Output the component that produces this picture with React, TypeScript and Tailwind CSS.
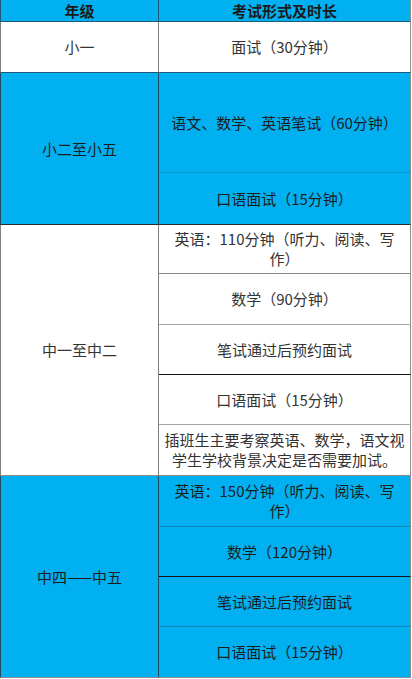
import React from "react";

const BLUE = "bg-[#00b0f0]";

type Sub = { text: React.ReactNode; h: string; line: string };

type Group = {
  label: string;
  blue: boolean;
  subs: Sub[];
};

const groups: Group[] = [
  {
    label: "小一",
    blue: false,
    subs: [{ text: "面试（30分钟）", h: "h-[51px]", line: "border-b-[#1d5a78]" }],
  },
  {
    label: "小二至小五",
    blue: true,
    subs: [
      { text: "语文、数学、英语笔试（60分钟）", h: "h-[100px]", line: "border-b-[#0b98cf]" },
      { text: "口语面试（15分钟）", h: "h-[52px]", line: "border-b-[#2b2b2b]" },
    ],
  },
  {
    label: "中一至中二",
    blue: false,
    subs: [
      {
        text: (
          <>
            英语：110分钟（听力、阅读、写
            <br />
            作）
          </>
        ),
        h: "h-[49px]",
        line: "border-b-[#8a8a8a]",
      },
      { text: "数学（90分钟）", h: "h-[51px]", line: "border-b-[#a6a6a6]" },
      { text: "笔试通过后预约面试", h: "h-[50px]", line: "border-b-[#111111]" },
      { text: "口语面试（15分钟）", h: "h-[50px]", line: "border-b-[#a6a6a6]" },
      {
        text: (
          <>
            插班生主要考察英语、数学，语文视
            <br />
            学生学校背景决定是否需要加试。
          </>
        ),
        h: "h-[51px]",
        line: "border-b-[#8a8a8a]",
      },
    ],
  },
  {
    label: "中四——中五",
    blue: true,
    subs: [
      {
        text: (
          <>
            英语：150分钟（听力、阅读、写
            <br />
            作）
          </>
        ),
        h: "h-[51px]",
        line: "border-b-[#1686b4]",
      },
      { text: "数学（120分钟）", h: "h-[50px]", line: "border-b-[#111111]" },
      { text: "笔试通过后预约面试", h: "h-[50px]", line: "border-b-[#1686b4]" },
      { text: "口语面试（15分钟）", h: "h-[51px]", line: "border-b-[#8c8c8c]" },
    ],
  },
];

export default function App() {
  return (
    <div
      className="min-h-screen w-[412px] bg-white"
      style={{ fontFamily: '"Noto Sans CJK SC", "Liberation Sans", sans-serif' }}
    >
      <table className="w-[411px] table-fixed border-separate border-spacing-0 text-[15px] leading-[20px]">
        <colgroup>
          <col className="w-[159px]" />
          <col className="w-[252px]" />
        </colgroup>
        <thead>
          <tr>
            <th
              className={`${BLUE} h-[22px] border-b border-l border-r border-b-[#1d5a78] border-l-[#1d5a78] border-r-[#1d5a78] p-0 text-center align-middle font-semibold text-[#1a1a1a]`}
            >
              年级
            </th>
            <th
              className={`${BLUE} h-[22px] border-b border-r border-b-[#1d5a78] border-r-[#8c8c8c] p-0 text-center align-middle font-semibold text-[#1a1a1a]`}
            >
              考试形式及时长
            </th>
          </tr>
        </thead>
        <tbody>
          {groups.map((g) =>
            g.subs.map((s, i) => {
              const bg = g.blue ? BLUE : "bg-white";
              const ink = g.blue ? "text-[#1c1c1c]" : "text-[#333333]";
              const edge = g.blue ? "border-l-[#1d4d66] border-r-[#1d4d66]" : "border-l-[#808080] border-r-[#808080]";
              const last = g.subs[g.subs.length - 1].line;
              return (
                <tr key={g.label + i}>
                  {i === 0 && (
                    <td
                      rowSpan={g.subs.length}
                      className={`${bg} ${ink} ${edge} border-b border-l border-r ${last} p-0 text-center align-middle`}
                    >
                      {g.label}
                    </td>
                  )}
                  <td
                    className={`${bg} ${ink} ${s.h} border-b border-r ${s.line} border-r-[#8c8c8c] whitespace-nowrap p-0 text-center align-middle`}
                  >
                    {s.text}
                  </td>
                </tr>
              );
            })
          )}
        </tbody>
      </table>
    </div>
  );
}
